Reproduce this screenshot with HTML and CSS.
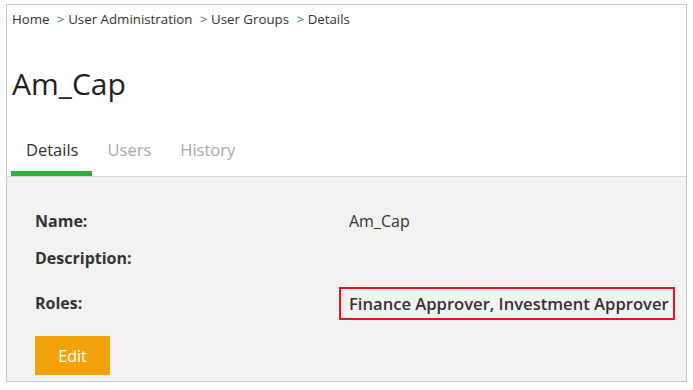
FILE: index.html
```html
<!DOCTYPE html>
<html lang="en">
<head>
  <meta charset="UTF-8" />
  <title>User Groups - Details</title>
  <link rel="stylesheet" href="styles.css">
</head>
<body>
  <div class="frame">
    <!-- breadcrumb -->
    <div class="crumbs">
      <a href="#">Home</a>
      <span class="sep">&gt;</span> <a href="#">User Administration</a>
      <span class="sep">&gt;</span> <a href="#">User Groups</a>
      <span class="sep">&gt;</span> <span>Details</span>
    </div>

    <h1 class="title">Am_Cap</h1>

    <div class="tabs">
      <a href="#" class="tab active">Details</a>
      <a href="#" class="tab">Users</a>
      <a href="#" class="tab">History</a>
    </div>

    <div class="panel">
      <div class="fields">
        <div class="label">Name:</div>
        <div class="value">Am_Cap</div>
        <div class="label">Description:</div>
        <div class="value"></div>
        <div class="label roles">Roles:</div>
        <div class="value highlight">Finance Approver, Investment Approver</div>
      </div>
      <button class="btn">Edit</button>
    </div>
  </div>
</body>
</html>
```

FILE: styles.css
```css
body { margin: 0; font-family: "Open Sans", "Noto Sans", sans-serif; color: #333; background: #fff; }
a { text-decoration: none; color: inherit; }

.frame { margin: 4px 6px 0 6px; width: 679px; height: 376px; border: 1px solid #c8c8c8; display: flex; flex-direction: column; }

.crumbs { padding: 4px 5px 0; font-size: 13.3px; line-height: 20px; color: #333; }
.crumbs .sep { color: #3a8a3a; margin-left: 4px; }

.title { margin: 35px 0 0 5px; font-size: 30px; font-weight: normal; line-height: 40px; color: #222; }

.tabs { display: flex; margin-top: 27px; border-bottom: 1px solid #d6d6d6; padding-left: 4px; }
.tab { font-size: 16.5px; line-height: 22px; padding: 8px 14px 10px 15px; color: #aaa; border-bottom: 5px solid transparent; }
.tab.active { color: #333; border-bottom-color: #2db03a; }

.panel { flex: 1; background: #f3f2f1; padding: 26px 28px 0; }
.fields { display: grid; grid-template-columns: 304px auto; align-items: center; }
.label { font-weight: bold; font-size: 16px; line-height: 37px; color: #333; }
.value { font-size: 16px; line-height: 37px; padding-left: 10px; }
.label.roles { margin-top: 8px; }
.value.highlight { justify-self: start; white-space: nowrap; font-size: 16.6px; font-weight: 600; line-height: 29px; border: 2px solid #e8141c; padding: 0 4px 0 8px; margin-top: 8px; }

.btn { margin-top: 14px; width: 75px; height: 39px; background: #f2a30c; color: #fff; border: none; font-family: inherit; font-size: 16px; cursor: pointer; }
```
